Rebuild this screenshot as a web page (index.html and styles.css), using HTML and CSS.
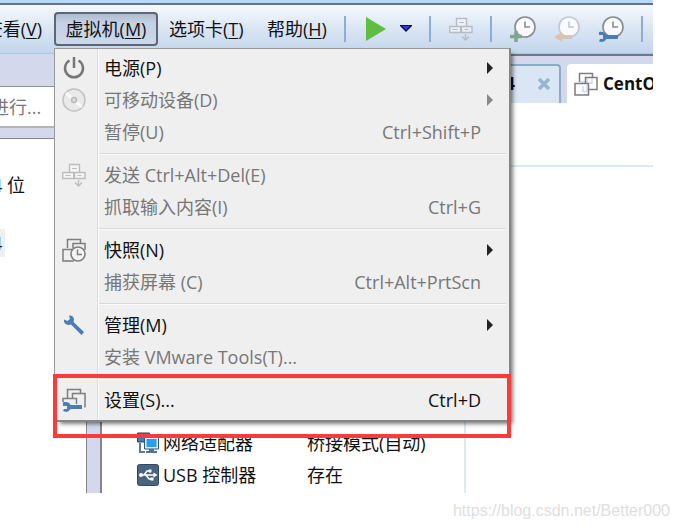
FILE: index.html
```html
<!DOCTYPE html>
<html lang="zh-CN">
<head>
    <meta charset="UTF-8">
    <meta name="viewport" content="width=device-width, initial-scale=1.0">
    <title>VMware Workstation</title>
    <link rel="stylesheet" href="styles.css">
</head>
<body>
    <!-- 公用图标 -->
    <svg class="defs" aria-hidden="true">
        <symbol id="i-keys" viewBox="0 0 24 24">
            <g fill="#fff" fill-opacity=".4" stroke="currentColor" stroke-width="1.4">
                <path d="M7.500 1.500h10v8h-10zM.7 9.500h11v6H.7zM12.500 9.500h10.500v6H12.500z"/>
                <path d="M10 5.500h5M3.500 12.500h5M15.500 12.500h4" stroke-width="1"/>
                <path d="M16.500 17v6M13 19.500l3.500 3.500 3.500-3.500" fill="none"/>
            </g>
        </symbol>
        <symbol id="i-clock" viewBox="0 0 26 26">
            <circle cx="15" cy="11" r="10" fill="#fff" fill-opacity=".8" stroke="currentColor" stroke-width="1.600"/>
            <path d="M15 5.500V11h5" fill="none" stroke="currentColor" stroke-width="1.600"/>
        </symbol>
        <symbol id="i-stack" viewBox="0 0 24 24">
            <path d="M5.500 10V1.500h13v4" fill="none" stroke="currentColor" stroke-width="1.500"/>
            <path d="M6 10h7V6M15 11h3V6M9 14v5.500h4V13" fill="none" stroke="#cfdaf0" stroke-width="1.500"/>
            <path d="M11.500 11V5.500h11.500v12h-8" fill="none" stroke="currentColor" stroke-width="1.500"/>
            <path d="M1 11.500h13.500v11.500H1z" fill="none" stroke="currentColor" stroke-width="1.500"/>
        </symbol>
    </svg>

    <div class="app">
        <div class="toolbar">
            <button class="menu-btn view" type="button">查看(<u>V</u>)</button>
            <button class="menu-btn open" type="button">虚拟机(<u>M</u>)</button>
            <button class="menu-btn cards" type="button">选项卡(<u>T</u>)</button>
            <button class="menu-btn help" type="button">帮助(<u>H</u>)</button>
            <span class="line"></span>
            <button class="tool play" type="button" aria-label="开机">
                <svg width="22" height="24" viewBox="0 0 22 24"><path d="M1 0l20 12L1 24z" fill="#5fbd42"/></svg>
            </button>
            <button class="tool drop" type="button" aria-label="电源选项">
                <svg width="12" height="7" viewBox="0 0 12 7"><path d="M0 0h12v1L6 7 0 1z" fill="#10104c"/><path d="M2 1h8L6 5z" fill="#2a3cf0"/></svg>
            </button>
            <span class="line"></span>
            <button class="tool keys" type="button" aria-label="发送"><svg width="24" height="24"><use href="#i-keys"/></svg></button>
            <span class="line"></span>
            <button class="tool" type="button" aria-label="拍摄快照">
                <svg width="26" height="26"><use href="#i-clock"/><path d="M6 15v11M0 20.500h12" stroke="#7fa592" stroke-width="3.500"/></svg>
            </button>
            <button class="tool faded" type="button" aria-label="恢复快照">
                <svg width="26" height="26"><use href="#i-clock"/><path d="M0 21l8-5v3h10v4H8v3z" fill="#dcc3b0"/></svg>
            </button>
            <button class="tool" type="button" aria-label="管理快照">
                <svg width="26" height="26"><use href="#i-clock"/><path d="M1 16c3-1 6 0 7.500 3H20v4H8.500c-2 3-5 3.500-7.500 2.500l1-2.500h3v-4H1z" fill="#4a7db3"/></svg>
            </button>
            <span class="line"></span>
        </div>

        <div class="main">
            <div class="sidebar">
                <input class="search" type="text" value="进行..." aria-label="搜索">
                <ul class="tree">
                    <li>4 位</li>
                    <li><span class="selected">4</span></li>
                </ul>
            </div>
            <div class="gutter"></div>
            <div class="content">
                <div class="tabs">
                    <div class="tab">
                        <span>4</span>
                        <button type="button" aria-label="关闭"><svg width="14" height="14" viewBox="0 0 14 14"><path d="M2 2l10 10M12 2L2 12" stroke="#96b5d0" stroke-width="3.500"/></svg></button>
                    </div>
                    <div class="tab active">
                        <svg width="24" height="24"><use href="#i-stack"/></svg>
                        <span>CentO</span>
                    </div>
                </div>
                <div class="head"></div>
                <div class="devices">
                    <table>
                        <tr>
                            <td class="icon">
                                <svg width="22" height="22" viewBox="0 0 22 22">
                                    <path d="M.5 1h12v9H.5z" fill="#3f7fb5" stroke="#27445d"/>
                                    <path d="M3 11v9h5" fill="none" stroke="#5e7a92" stroke-width="2"/>
                                    <path d="M7.500 5h14v12h-14z" fill="#dcebf5" stroke="#36556e"/>
                                    <path d="M9.500 7h10v8h-10z" fill="#2b9df0"/>
                                    <path d="M12 17h5v2h3v2H9v-2h3z" fill="#56738c"/>
                                </svg>
                            </td>
                            <td class="name">网络适配器</td>
                            <td>桥接模式(自动)</td>
                        </tr>
                        <tr>
                            <td class="icon">
                                <svg width="22" height="22" viewBox="0 0 22 22">
                                    <rect x=".5" y=".5" width="21" height="21" rx="2" fill="#4b6580" stroke="#304a62"/>
                                    <path d="M3 11h14M7 11l3-4h3M9 11l3 4h3" fill="none" stroke="#fff" stroke-width="1.500"/>
                                    <circle cx="4" cy="11" r="2" fill="#fff"/><circle cx="13" cy="7" r="1.700" fill="#fff"/>
                                    <path d="M13.500 13.500h3v3h-3zM16.500 8.500l4 2.500-4 2.500z" fill="#fff"/>
                                </svg>
                            </td>
                            <td class="name">USB 控制器</td>
                            <td>存在</td>
                        </tr>
                    </table>
                </div>
            </div>
        </div>

        <!-- 虚拟机下拉菜单 -->
        <ul class="menu">
            <li>
                <button type="button">
                    <svg class="ico" width="24" height="24" viewBox="0 0 24 24"><path d="M7.500 4.500a9 9 0 1 0 9 0M12 1v11" fill="none" stroke="#777" stroke-width="2.500"/></svg>
                    <span>电源(P)</span><i class="arrow"></i>
                </button>
            </li>
            <li>
                <button type="button" disabled>
                    <svg class="ico" width="24" height="24" viewBox="0 0 24 24"><circle cx="12" cy="12" r="11" fill="#e9e9e9" stroke="#c2c2c2" stroke-width="1.500"/><path d="M4 5l6 5M14 14l6 5" stroke="#f7f7f7" stroke-width="3"/><circle cx="12" cy="12" r="2.500" fill="#ddd" stroke="#bbb" stroke-width="1.500"/></svg>
                    <span>可移动设备(D)</span><i class="arrow"></i>
                </button>
            </li>
            <li><button type="button" disabled><i class="ico"></i><span>暂停(U)</span><kbd>Ctrl+Shift+P</kbd></button></li>
            <li class="sep"></li>
            <li>
                <button type="button" disabled>
                    <svg class="ico keys" width="24" height="24"><use href="#i-keys"/></svg>
                    <span>发送 Ctrl+Alt+Del(E)</span>
                </button>
            </li>
            <li><button type="button" disabled><i class="ico"></i><span>抓取输入内容(I)</span><kbd>Ctrl+G</kbd></button></li>
            <li class="sep"></li>
            <li>
                <button type="button">
                    <svg class="ico stack" width="24" height="24" viewBox="0 0 24 24"><path d="M5.500 10V1.500h13V6M11 10V5.500h12V12M12 23H1V11.500h10" fill="none" stroke="currentColor" stroke-width="1.500"/><circle cx="16" cy="16" r="7" fill="#f4f4f4" stroke="currentColor" stroke-width="1.600"/><path d="M15.500 11.500v5h4.500" fill="none" stroke="currentColor" stroke-width="1.500"/></svg>
                    <span>快照(N)</span><i class="arrow"></i>
                </button>
            </li>
            <li><button type="button" disabled><i class="ico"></i><span>捕获屏幕 (C)</span><kbd>Ctrl+Alt+PrtScn</kbd></button></li>
            <li class="sep"></li>
            <li>
                <button type="button">
                    <svg class="ico" width="24" height="24" viewBox="0 0 24 24"><path d="M2 6.500l3.500 1.500L8 6 7 2.500c4-.5 6 3 4.500 6.500L22 19l-2.500 3L9 11.500C5 13 1.500 10.500 2 6.500z" fill="#4a7db3"/></svg>
                    <span>管理(M)</span><i class="arrow"></i>
                </button>
            </li>
            <li><button type="button" disabled><i class="ico"></i><span>安装 VMware Tools(T)...</span></button></li>
            <li class="sep"></li>
            <li class="setting">
                <button type="button">
                    <svg class="ico stack" width="24" height="24" viewBox="0 0 24 24"><path d="M5.500 10V1.500h13V5M10.500 10V5.500h12.500v14M1 14v-3.500h13.500V16" fill="none" stroke="currentColor" stroke-width="1.500"/><path d="M1 14.500c4-1 6.500 0 7.500 2.500H20v4H8.500c-2 3-5 3.500-7.500 2l1-2h3v-3H1z" fill="#4a7db3"/></svg>
                    <span>设置(S)...</span><kbd>Ctrl+D</kbd>
                </button>
            </li>
        </ul>
        <div class="mark"></div>
    </div>
    <p class="watermark">https://blog.csdn.net/Better000</p>
</body>
</html>
```

FILE: styles.css
```css
* {
    box-sizing: border-box;
    margin: 0;
    padding: 0;
}
body {
    background: #fff;
    color: #111;
    font: 18px/24px "Open Sans", "Noto Sans CJK SC", sans-serif;
}
button, input {
    font: inherit;
    color: inherit;
    border: none;
    background: none;
}
ul {
    list-style: none;
}
svg {
    display: block;
    flex: none;
}
.defs {
    position: absolute;
    width: 0;
    height: 0;
}
.app {
    position: relative;
    display: flex;
    flex-direction: column;
    margin-right: 25px;
    min-height: 493px;
    overflow: hidden;
}

/* 工具栏 */
.toolbar {
    display: flex;
    align-items: center;
    height: 54px;
    padding-top: 1px;
    border-top: 3px solid #b6d8fb;
    border-bottom: 1px solid #a6c8ea;
    background: linear-gradient(#5f738c 0, #5f738c 2px, #f6f9fe 2px, #dbe6f4 50%, #c3d5ec 100%);
}
.menu-btn {
    flex: none;
    height: 34px;
    white-space: nowrap;
    text-align: left;
}
.menu-btn u {
    text-underline-offset: 2px;
}
.view {
    display: flex;
    justify-content: flex-end;
    width: 54px;
    padding-right: 12px;
    align-items: center;
}
.open {
    width: 104px;
    text-align: center;
    border: 2px solid #5c6675;
    border-radius: 4px;
    background: linear-gradient(#aebccd, #c5d2e3 30%, #cbd8e9);
}
.cards {
    width: 98px;
    margin-left: 11px;
}
.help {
    width: 77px;
}
.line {
    flex: none;
    width: 2px;
    height: 26px;
    background: #8aaed6;
}
.tool {
    margin-left: 18px;
    color: #8a8a8a;
}
.play {
    margin-left: 19px;
}
.drop {
    margin: 0 17px 0 13px;
}
.keys {
    color: #b8bcc2;
}
.tool + .line {
    margin-left: 17px;
}
.drop + .line {
    margin-left: 0;
}
.faded {
    color: #c3c8cf;
}

/* 左侧 */
.main {
    display: flex;
    flex: 1;
}
.sidebar {
    display: flex;
    flex-direction: column;
    width: 86px;
    padding-top: 32px;
    background: #d3d8ec;
}
.search {
    width: 100%;
    height: 42px;
    padding-bottom: 2px;
    border-top: 1px solid #909090;
    border-bottom: 2px solid #b4b4b4;
    background: #fff;
    color: #777;
    text-indent: -9px;
}
.tree {
    flex: 1;
    margin-top: 10px;
    padding-top: 32px;
    border-top: 1px solid #888;
    background: #fff;
    text-indent: -8px;
}
.tree li {
    height: 58px;
    line-height: 28px;
}
.selected {
    padding: 2px 3px 2px 0;
    background: #efefef;
}
.gutter {
    width: 16px;
    border-left: 1px solid #888;
    border-right: 2px solid #858585;
    background: #d3d8ec;
}

/* 右侧 */
.content {
    display: flex;
    flex: 1;
    flex-direction: column;
    min-width: 0;
    border-top: 2px solid #74777f;
}
.tabs {
    display: flex;
    gap: 6px;
    height: 47px;
    padding-top: 8px;
    background: #d3d8ec;
    font-size: 17px;
}
.tab {
    display: flex;
    flex: 1;
    align-items: center;
    justify-content: flex-end;
    gap: 22px;
    padding: 0 8px 2px 0;
    border-top: 2px solid #8cabc6;
    border-right: 2px solid #8cabc6;
    border-top-right-radius: 4px;
    background: #dae6f4;
    font-weight: bold;
}
.active {
    flex: none;
    justify-content: flex-start;
    gap: 5px;
    width: 86px;
    padding: 0 0 0 7px;
    border: none;
    border-radius: 4px 0 0 0;
    background: #fff;
}
.active svg {
    color: #7e7e7e;
}
.head {
    height: 64px;
    border-bottom: 2px solid #dde8f5;
}
.devices {
    display: flex;
    flex: 1;
    align-items: flex-end;
    width: 364px;
    padding: 0 0 2px 35px;
    border-right: 2px solid #dde8f5;
}
table {
    border-collapse: collapse;
}
td {
    height: 32px;
    white-space: nowrap;
}
.icon {
    width: 26px;
}
.name {
    width: 144px;
}

/* 菜单 */
.menu {
    position: absolute;
    top: 48px;
    left: 54px;
    width: 457px;
    padding: 3px 3px 4px;
    border: 1px solid #999;
    border-right: 2px solid #858585;
    border-bottom: 2px solid #858585;
    background: linear-gradient(90deg, #efefef 42px, #dcdcdc 42px, #dcdcdc 43px, #fafafa 43px, #fafafa 44px, #efefef 44px);
    box-shadow: 4px 4px 4px -2px rgba(0, 0, 0, .5);
}
.menu button {
    display: flex;
    align-items: center;
    width: 100%;
    height: 32px;
    padding: 0 25px 0 4px;
    text-align: left;
    white-space: nowrap;
}
.menu button:disabled {
    color: #777;
}
.ico {
    flex: none;
    width: 24px;
    margin-right: 18px;
}
.ico.stack {
    color: #7e7e7e;
}
.menu .ico.keys {
    margin-left: 0;
    color: #bdbdbd;
}
kbd {
    margin-left: auto;
    font: inherit;
}
.arrow {
    margin: 0 -12px 0 auto;
    border: 6px solid transparent;
    border-left-color: #222;
    border-right-width: 0;
}
button:disabled .arrow {
    border-left-color: #888;
}
.sep {
    height: 2px;
    margin: 5px 0 4px 41px;
    border-top: 1px solid #d9d9d9;
    background: #fbfbfb;
}
.mark {
    position: absolute;
    top: 374px;
    left: 53px;
    width: 458px;
    height: 64px;
    border: 4px solid #fb3b3b;
}
.watermark {
    padding: 6px 8px 0 0;
    color: #dedede;
    font: 16px/24px "Liberation Sans", Arial, sans-serif;
    text-align: right;
}
```
